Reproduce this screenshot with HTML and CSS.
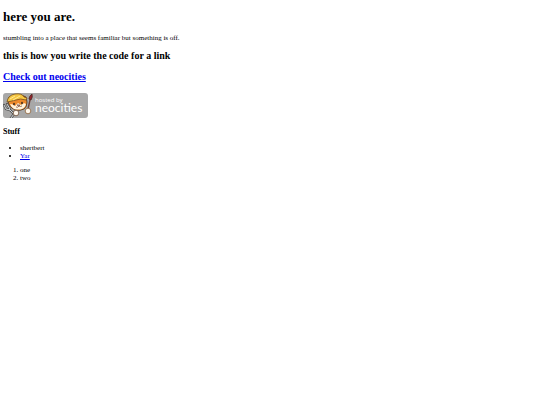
FILE: index.html
```html
<!DOCTYPE html>
<html lang="en">
<head>
    <meta charset="UTF-8">
    <meta name="viewport" content="width=device-width, initial-scale=1.0">
    <title>here you are.</title>
    <link rel="stylesheet" href="styles.css">
</head>
<body>
    <h1>here you are.</h1>
    <p>stumbling into a place that seems familiar but something is off.</p>

    <h2>this is how you write the code for a link</h2>
    <h2><a href="#neocities">Check out neocities</a></h2>

    <a class="badge" href="#neocities">
        <svg viewBox="0 0 85 25" width="85" height="25" role="img" aria-label="hosted by neocities">
            <rect width="85" height="25" rx="3" fill="#a8a8a8"/>
            <!-- fork -->
            <path d="M1 12l2 4 4 1M4 11l3 5M6 16l5 5-3 4" fill="none" stroke="#555" stroke-width="2.4" stroke-linecap="round"/>
            <path d="M1 12l2 4 4 1M4 11l3 5M6 16l5 5-3 4" fill="none" stroke="#d0d5d8" stroke-width="1"/>
            <!-- cat -->
            <path d="M5 8l1-4 6-2q7-1 11 2l1 5q0 5-3 7-4 2-8 1-7-2-8-9z" fill="#ee8a2b" stroke="#49301c" stroke-width=".8"/>
            <path d="M7 11q3 0 5 2l3-3 3 2q3-3 5-1-1 4-4 5-4 1-8 0-3-2-4-5z" fill="#fff3dc"/>
            <path d="M4 9Q5 2 12 1q7-1 9 3l3 1-1 2q-6-2-10 0-4 1-9 2z" fill="#f6c742" stroke="#76501f" stroke-width=".8"/>
            <path d="M7 6l5-3M10 7l7-4" stroke="#ffe995" stroke-width="1"/>
            <ellipse cx="11" cy="11" rx=".8" ry="1.2" fill="#33251d"/>
            <ellipse cx="19" cy="10" rx=".8" ry="1.2" fill="#33251d"/>
            <path d="M14 12h3l-1 1zM13 14q2 1 3-1 1 1 3 0" fill="none" stroke="#754334" stroke-width=".7"/>
            <!-- brush -->
            <path d="M25 16L27 7" stroke="#70453c" stroke-width="1.4" stroke-linecap="round"/>
            <path d="M26 6Q26 3 29 1q1 3-1 6z" fill="#98242e" stroke="#4b2520" stroke-width=".8"/>
            <!-- paws -->
            <circle cx="13" cy="20" r="2.8" fill="#fff8ed" stroke="#694a35" stroke-width=".8"/>
            <circle cx="25" cy="18" r="2.8" fill="#fff8ed" stroke="#8b633d" stroke-width=".8"/>
            <text class="badge-small" x="32" y="9">hosted by</text>
            <text class="badge-name" x="32" y="19">neocities</text>
        </svg>
    </a>

    <h3>Stuff</h3>
    <ul>
        <li>shertbert</li>
        <li><a href="#yar">Yar</a></li>
    </ul>
    <ol>
        <li>one</li>
        <li>two</li>
    </ol>
</body>
</html>
```
FILE: styles.css
```css
body {
    margin: 9px 3px;
    background-color: #fff;
    color: #000;
    font-family: "Liberation Serif", "Times New Roman", serif;
    font-size: 7px;
    line-height: 8px;
}

h1 {
    margin: 0 0 9px;
    font-size: 13px;
    line-height: 16px;
}

p {
    margin: 0 0 8px;
}

h2 {
    margin: 0 0 9px;
    font-size: 10px;
    line-height: 12px;
}

h3 {
    margin: 9px 0 7px;
    font-size: 8px;
    line-height: 10px;
}

a {
    color: #0000ee;
}

ul,
ol {
    margin: 0 0 6px;
    padding-left: 17px;
}

/* hosted by badge */
.badge {
    display: block;
    width: fit-content;
    margin-top: 10px;
}

.badge svg {
    display: block;
}

.badge text {
    fill: #fff;
    font-family: "Open Sans", sans-serif;
}

.badge .badge-small {
    font-size: 6px;
}

.badge .badge-name {
    font-family: Lato, "Open Sans", sans-serif;
    font-size: 12px;
}
```
